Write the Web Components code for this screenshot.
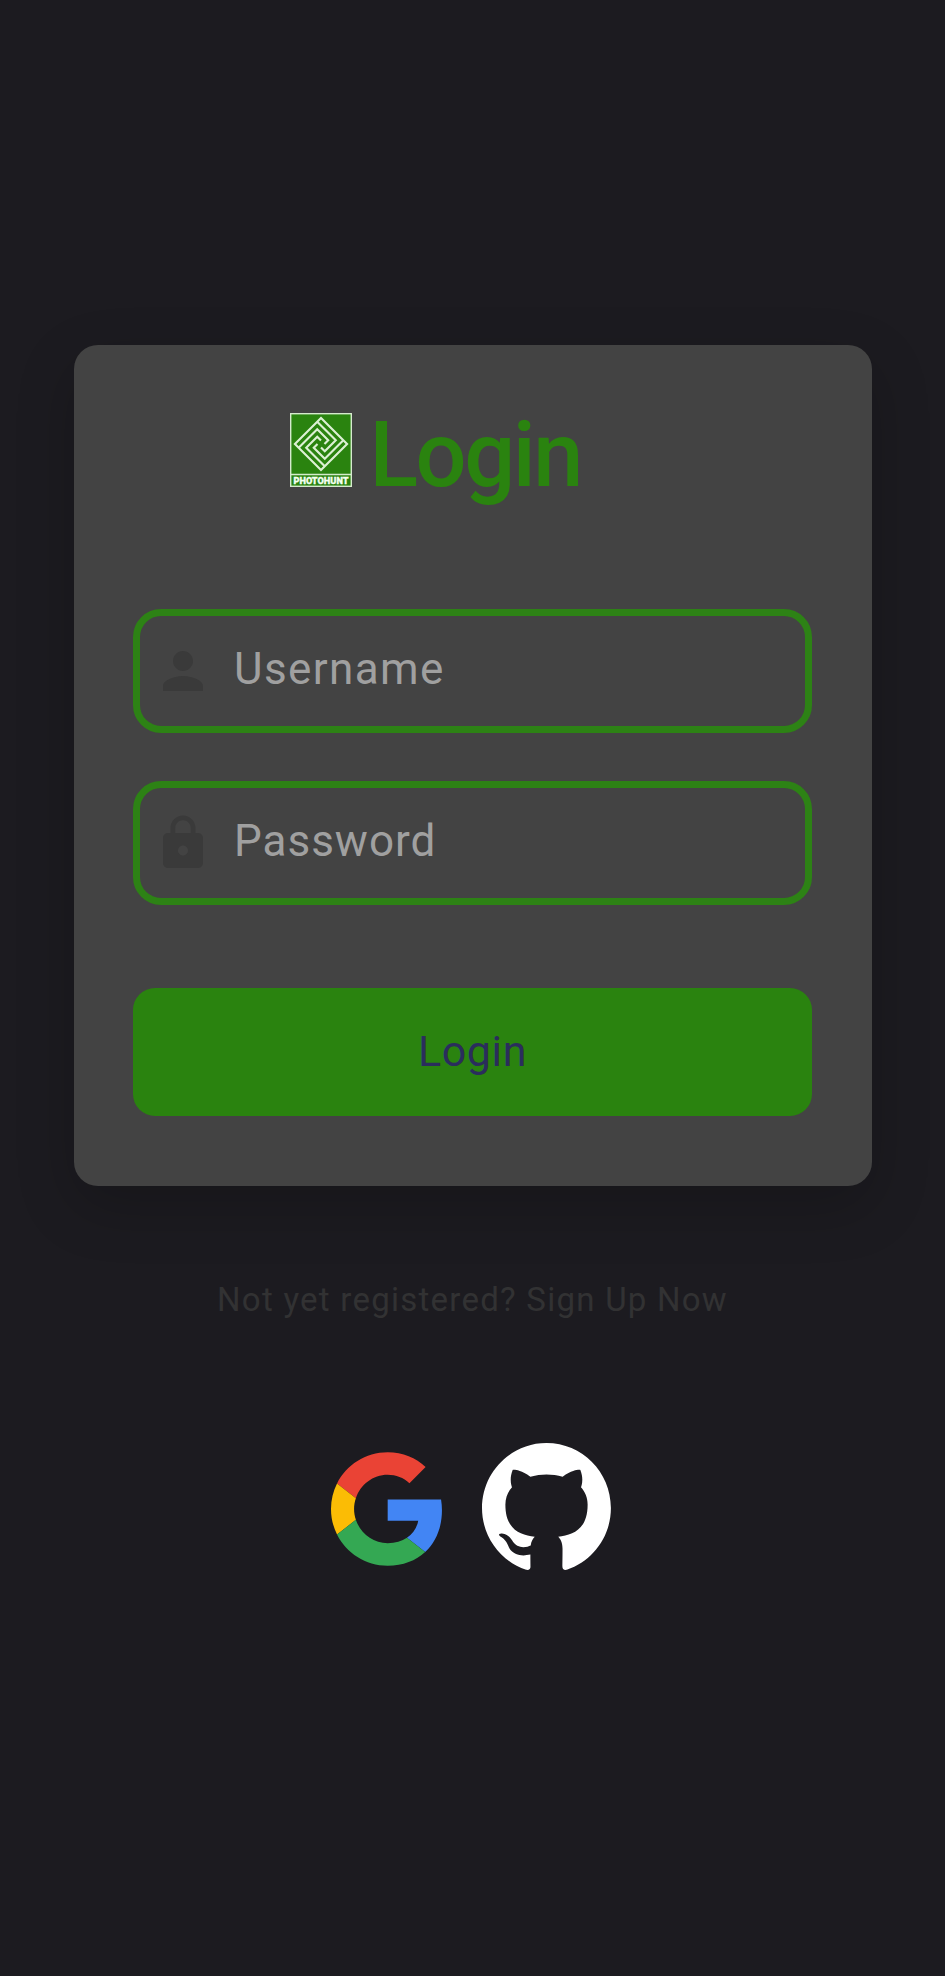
<!DOCTYPE html>
<html lang="en"><head><meta charset="utf-8"><title>Login</title>
<style>
html,body{margin:0;background:#1c1b20;font-family:Roboto,"Liberation Sans",sans-serif}
</style></head><body>
<login-page></login-page>
<script>
const define=(name,html)=>customElements.define(name,class extends HTMLElement{
  constructor(){super();const t=document.createElement('template');t.innerHTML=html;
    this.attachShadow({mode:'open'}).append(t.content.cloneNode(true));}
});

define('brand-logo',`<style>:host{display:block;width:62px;height:74px}svg{display:block}
text{font:900 8.6px Roboto,sans-serif;fill:#f4fff0;stroke:#f4fff0;stroke-width:.3}</style>
<svg width="62" height="74" viewBox="0 0 62 74">
<rect x=".7" y=".7" width="60.6" height="72.6" fill="#2a830f" stroke="#d5ebcd" stroke-width="1.4"/>
<path d="M0 61.5H62" stroke="#d5ebcd" stroke-width="1.3"/>
<g transform="translate(31 31) rotate(45) scale(4.1)" fill="none" stroke="#dcf0d4" stroke-width=".52">
<rect x="-4.5" y="-4.5" width="9" height="9"/>
<path d="M-4.5-3.2H1.9V.6H.6"/><path d="M-4.5-3.2H1.9V.6H.6" transform="rotate(90)"/>
<path d="M-4.5-3.2H1.9V.6H.6" transform="rotate(180)"/><path d="M-4.5-3.2H1.9V.6H.6" transform="rotate(270)"/>
</g><text x="3.5" y="70.6" textLength="55" lengthAdjust="spacingAndGlyphs">PHOTOHUNT</text></svg>`);

define('card-title',`<style>:host{display:flex;align-items:flex-start;height:140px;padding-left:156.5px}
h1{margin:-10px 0 0 18px;font-size:90px;line-height:106px;font-weight:500;letter-spacing:-2.5px;color:#2a830f}</style>
<brand-logo></brand-logo><h1><slot></slot></h1>`);

define('person-icon',`<style>:host{display:block}svg{display:block}</style>
<svg width="60" height="60" viewBox="0 0 24 24" fill="#3a3a3a"><path d="M12 12c2.21 0 4-1.79 4-4s-1.79-4-4-4-4 1.79-4 4 1.79 4 4 4zm0 2c-2.67 0-8 1.34-8 4v2h16v-2c0-2.66-5.33-4-8-4z"/></svg>`);

define('lock-icon',`<style>:host{display:block}svg{display:block}</style>
<svg width="60" height="60" viewBox="0 0 24 24" fill="#3a3a3a"><path d="M18 8h-1V6c0-2.76-2.24-5-5-5S7 3.24 7 6v2H6c-1.1 0-2 .9-2 2v10c0 1.1.9 2 2 2h12c1.1 0 2-.9 2-2V10c0-1.1-.9-2-2-2zm-6 9c-1.1 0-2-.9-2-2s.9-2 2-2 2 .9 2 2-.9 2-2 2zm3.1-9H8.9V6c0-1.71 1.39-3.1 3.1-3.1 1.71 0 3.1 1.39 3.1 3.1v2z"/></svg>`);

define('text-field',`<style>:host{display:flex;align-items:center;box-sizing:border-box;height:124px;border:7px solid #2d8215;border-radius:28px;padding-left:13px;font-size:44px;color:#a0a0a0}
.label{margin-left:21px;letter-spacing:var(--track,0px);line-height:52px;padding-bottom:3px}</style>
<slot name="icon"></slot><span class="label"><slot></slot></span>`);

define('login-button',`<style>:host{display:block}
button{display:block;width:100%;height:128px;border:0;border-radius:22px;background:#2a830f;color:#2a2d5c;font:400 43px/50px Roboto,sans-serif;padding:0 0 2px;letter-spacing:.6px}</style>
<button><slot></slot></button>`);

define('login-card',`<style>:host{display:block;box-sizing:border-box;width:798px;height:841px;margin:0 auto;padding:68px 59.5px 0;border-radius:24px;background:#434343;box-shadow:0 20px 60px rgba(0,0,0,.2)}
.fields{display:flex;flex-direction:column;gap:48px;margin-top:56px}
login-button{margin-top:83px}</style>
<card-title>Login</card-title>
<div class="fields"><text-field style="--track:1.4px"><person-icon slot="icon"></person-icon>Username</text-field>
<text-field style="--track:1px"><lock-icon slot="icon"></lock-icon>Password</text-field></div>
<login-button>Login</login-button>`);

define('google-icon',`<style>:host{display:block;padding-top:5px}svg{display:block}</style>
<svg width="111" height="114" viewBox="0 0 47 48">
<path fill="#EA4335" d="M24 9.5c3.54 0 6.71 1.22 9.21 3.6l6.85-6.85C35.9 2.38 30.47 0 24 0 14.62 0 6.51 5.38 2.56 13.22l7.98 6.19C12.43 13.72 17.74 9.5 24 9.5z"/>
<path fill="#4285F4" d="M46.98 24.55c0-1.57-.15-3.09-.38-4.55H24v9.02h12.94c-.58 2.96-2.26 5.48-4.78 7.18l7.73 6c4.51-4.18 7.09-10.36 7.09-17.65z"/>
<path fill="#FBBC05" d="M10.53 28.59c-.48-1.45-.76-2.99-.76-4.59s.27-3.14.76-4.59l-7.98-6.19C.92 16.46 0 20.12 0 24c0 3.88.92 7.54 2.56 10.78l7.97-6.19z"/>
<path fill="#34A853" d="M24 48c6.48 0 11.93-2.13 15.89-5.81l-7.73-6c-2.15 1.45-4.92 2.3-8.16 2.3-6.26 0-11.57-4.22-13.47-9.91l-7.98 6.19C6.51 42.62 14.62 48 24 48z"/></svg>`);

define('github-icon',`<style>:host{display:block}svg{display:block}</style>
<svg width="129" height="127" viewBox="0 0 97.7 96"><path fill="#fff" d="M48.854 0C21.839 0 0 22 0 49.217c0 21.756 13.993 40.172 33.405 46.69 2.427.49 3.316-1.059 3.316-2.362 0-1.141-.08-5.052-.08-9.127-13.59 2.934-16.42-5.867-16.42-5.867-2.184-5.704-5.42-7.17-5.42-7.17-4.448-3.015.324-3.015.324-3.015 4.934.326 7.523 5.052 7.523 5.052 4.367 7.496 11.404 5.378 14.235 4.074.404-3.178 1.699-5.378 3.074-6.6-10.839-1.141-22.243-5.378-22.243-24.283 0-5.378 1.94-9.778 5.014-13.2-.485-1.222-2.184-6.275.486-13.038 0 0 4.125-1.304 13.426 5.052a46.97 46.97 0 0 1 12.214-1.63c4.125 0 8.33.571 12.213 1.63 9.302-6.356 13.427-5.052 13.427-5.052 2.67 6.763.97 11.816.485 13.038 3.155 3.422 5.015 7.822 5.015 13.2 0 18.905-11.404 23.06-22.324 24.283 1.78 1.548 3.316 4.481 3.316 9.126 0 6.6-.08 11.897-.08 13.526 0 1.304.89 2.853 3.316 2.364 19.412-6.52 33.405-24.935 33.405-46.691C97.707 22 75.788 0 48.854 0z"/></svg>`);

define('login-page',`<style>:host{display:block;box-sizing:border-box;height:1976px;padding-top:344.5px;background:#1c1b20;overflow:hidden}
p{margin:94px 0 0;text-align:center;font-size:33px;line-height:40px;font-weight:400;color:#323233;letter-spacing:1.25px}
.social{display:flex;justify-content:center;align-items:center;gap:40px;margin-top:123px;padding-right:3px}</style>
<login-card></login-card>
<p>Not yet registered? Sign Up Now</p>
<div class="social"><google-icon></google-icon><github-icon></github-icon></div>`);
</script></body></html>
